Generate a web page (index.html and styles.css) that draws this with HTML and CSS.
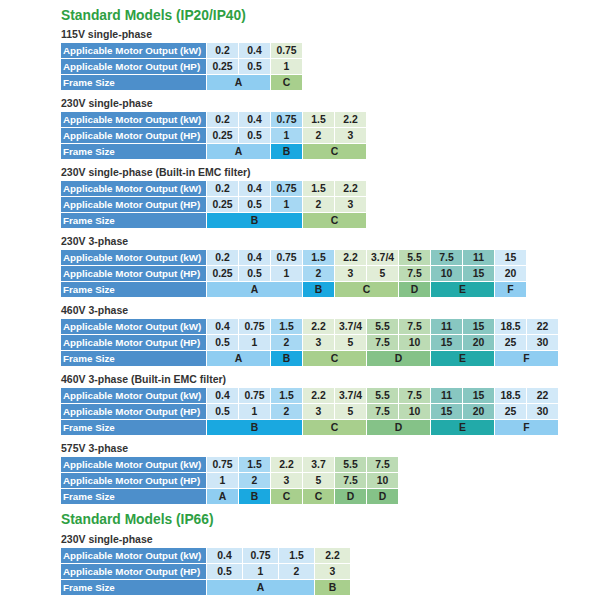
FILE: index.html
```html
<!DOCTYPE html>
<html>
<head>
<meta charset="utf-8">
<link rel="stylesheet" href="styles.css">
</head>
<body>
<div class="page">
  <h2 class="title">Standard Models (IP20/IP40)</h2>

  <section class="sec">
    <h3 class="label">115V single-phase</h3>
    <div class="grid c3">
      <div class="hd">Applicable Motor Output (kW)</div><div class="a">0.2</div><div class="a">0.4</div><div class="c">0.75</div>
      <div class="hd">Applicable Motor Output (HP)</div><div class="a">0.25</div><div class="a">0.5</div><div class="c">1</div>
      <div class="hd">Frame Size</div><div class="fa s2">A</div><div class="fc">C</div>
    </div>
  </section>

  <section class="sec">
    <h3 class="label">230V single-phase</h3>
    <div class="grid c5">
      <div class="hd">Applicable Motor Output (kW)</div><div class="a">0.2</div><div class="a">0.4</div><div class="b">0.75</div><div class="c">1.5</div><div class="c">2.2</div>
      <div class="hd">Applicable Motor Output (HP)</div><div class="a">0.25</div><div class="a">0.5</div><div class="b">1</div><div class="c">2</div><div class="c">3</div>
      <div class="hd">Frame Size</div><div class="fa s2">A</div><div class="fb">B</div><div class="fc s2">C</div>
    </div>
  </section>

  <section class="sec">
    <h3 class="label">230V single-phase (Built-in EMC filter)</h3>
    <div class="grid c5">
      <div class="hd">Applicable Motor Output (kW)</div><div class="a">0.2</div><div class="a">0.4</div><div class="b">0.75</div><div class="c">1.5</div><div class="c">2.2</div>
      <div class="hd">Applicable Motor Output (HP)</div><div class="a">0.25</div><div class="a">0.5</div><div class="b">1</div><div class="c">2</div><div class="c">3</div>
      <div class="hd">Frame Size</div><div class="fb s3">B</div><div class="fc s2">C</div>
    </div>
  </section>

  <section class="sec">
    <h3 class="label">230V 3-phase</h3>
    <div class="grid c10">
      <div class="hd">Applicable Motor Output (kW)</div><div class="a">0.2</div><div class="a">0.4</div><div class="a">0.75</div><div class="b">1.5</div><div class="c">2.2</div><div class="c">3.7/4</div><div class="d">5.5</div><div class="e">7.5</div><div class="e">11</div><div class="f">15</div>
      <div class="hd">Applicable Motor Output (HP)</div><div class="a">0.25</div><div class="a">0.5</div><div class="a">1</div><div class="b">2</div><div class="c">3</div><div class="c">5</div><div class="d">7.5</div><div class="e">10</div><div class="e">15</div><div class="f">20</div>
      <div class="hd">Frame Size</div><div class="fa s3">A</div><div class="fb">B</div><div class="fc s2">C</div><div class="fd">D</div><div class="fe s2">E</div><div class="ff">F</div>
    </div>
  </section>

  <section class="sec">
    <h3 class="label">460V 3-phase</h3>
    <div class="grid c11">
      <div class="hd">Applicable Motor Output (kW)</div><div class="a">0.4</div><div class="a">0.75</div><div class="b">1.5</div><div class="c">2.2</div><div class="c">3.7/4</div><div class="d">5.5</div><div class="d">7.5</div><div class="e">11</div><div class="e">15</div><div class="f">18.5</div><div class="f">22</div>
      <div class="hd">Applicable Motor Output (HP)</div><div class="a">0.5</div><div class="a">1</div><div class="b">2</div><div class="c">3</div><div class="c">5</div><div class="d">7.5</div><div class="d">10</div><div class="e">15</div><div class="e">20</div><div class="f">25</div><div class="f">30</div>
      <div class="hd">Frame Size</div><div class="fa s2">A</div><div class="fb">B</div><div class="fc s2">C</div><div class="fd s2">D</div><div class="fe s2">E</div><div class="ff s2">F</div>
    </div>
  </section>

  <section class="sec">
    <h3 class="label">460V 3-phase (Built-in EMC filter)</h3>
    <div class="grid c11">
      <div class="hd">Applicable Motor Output (kW)</div><div class="a">0.4</div><div class="a">0.75</div><div class="b">1.5</div><div class="c">2.2</div><div class="c">3.7/4</div><div class="d">5.5</div><div class="d">7.5</div><div class="e">11</div><div class="e">15</div><div class="f">18.5</div><div class="f">22</div>
      <div class="hd">Applicable Motor Output (HP)</div><div class="a">0.5</div><div class="a">1</div><div class="b">2</div><div class="c">3</div><div class="c">5</div><div class="d">7.5</div><div class="d">10</div><div class="e">15</div><div class="e">20</div><div class="f">25</div><div class="f">30</div>
      <div class="hd">Frame Size</div><div class="fb s3">B</div><div class="fc s2">C</div><div class="fd s2">D</div><div class="fe s2">E</div><div class="ff s2">F</div>
    </div>
  </section>

  <section class="sec">
    <h3 class="label">575V 3-phase</h3>
    <div class="grid c6">
      <div class="hd">Applicable Motor Output (kW)</div><div class="a">0.75</div><div class="b">1.5</div><div class="c">2.2</div><div class="c">3.7</div><div class="d">5.5</div><div class="d">7.5</div>
      <div class="hd">Applicable Motor Output (HP)</div><div class="a">1</div><div class="b">2</div><div class="c">3</div><div class="c">5</div><div class="d">7.5</div><div class="d">10</div>
      <div class="hd">Frame Size</div><div class="fa">A</div><div class="fb">B</div><div class="fc">C</div><div class="fc">C</div><div class="fd">D</div><div class="fd">D</div>
    </div>
  </section>

  <h2 class="title second">Standard Models (IP66)</h2>

  <section class="sec">
    <h3 class="label">230V single-phase</h3>
    <div class="grid c4w">
      <div class="hd">Applicable Motor Output (kW)</div><div class="a">0.4</div><div class="a">0.75</div><div class="a">1.5</div><div class="c">2.2</div>
      <div class="hd">Applicable Motor Output (HP)</div><div class="a">0.5</div><div class="a">1</div><div class="a">2</div><div class="c">3</div>
      <div class="hd">Frame Size</div><div class="fa s3">A</div><div class="fc">B</div>
    </div>
  </section>
</div>
</body>
</html>
```

FILE: styles.css
```css
html, body {
  margin: 0;
  padding: 0;
  background: #ffffff;
}

.page {
  padding: 6px 0 0 61px;
  font-family: "Liberation Sans", Arial, sans-serif;
}

.title {
  margin: 0 0 1px 0;
  font-size: 13.8px;
  line-height: 20px;
  font-weight: bold;
  color: #2ea043;
}

.title.second {
  margin-top: 1px;
  margin-bottom: 2px;
}

.sec {
  margin: 0 0 6px 0;
}

.label {
  margin: 0 0 1px 0;
  font-size: 10.5px;
  line-height: 15px;
  font-weight: bold;
  color: #333333;
}

.grid {
  display: grid;
  grid-auto-rows: 15px;
  gap: 1px;
  font-size: 10.4px;
  font-weight: bold;
  color: #222222;
}

.c3 { grid-template-columns: 145px repeat(3, 31px); }
.c4w { grid-template-columns: 145px repeat(4, 35px); }
.c5 { grid-template-columns: 145px repeat(5, 31px); }
.c6 { grid-template-columns: 145px repeat(6, 31px); }
.c10 { grid-template-columns: 145px repeat(10, 31px); }
.c11 { grid-template-columns: 145px repeat(11, 31px); }

.grid > div {
  display: flex;
  align-items: center;
  justify-content: center;
  white-space: nowrap;
}

.grid > .hd {
  justify-content: flex-start;
  padding-left: 2px;
  background: #4d8fcb;
  color: #ffffff;
  font-size: 9.8px;
}

.s2 { grid-column: span 2; }
.s3 { grid-column: span 3; }

.a { background: #cfe7f7; }
.b { background: #a7d8f3; }
.c { background: #e1edd7; }
.d { background: #bcdbb4; }
.e { background: #88c7c1; }
.f { background: #d2e9f8; }

.fa { background: #8fcdf1; }
.fb { background: #1aa8e0; }
.fc { background: #a8cf8d; }
.fd { background: #85c288; }
.fe { background: #22aaa9; }
.ff { background: #8fcdf1; }
```
